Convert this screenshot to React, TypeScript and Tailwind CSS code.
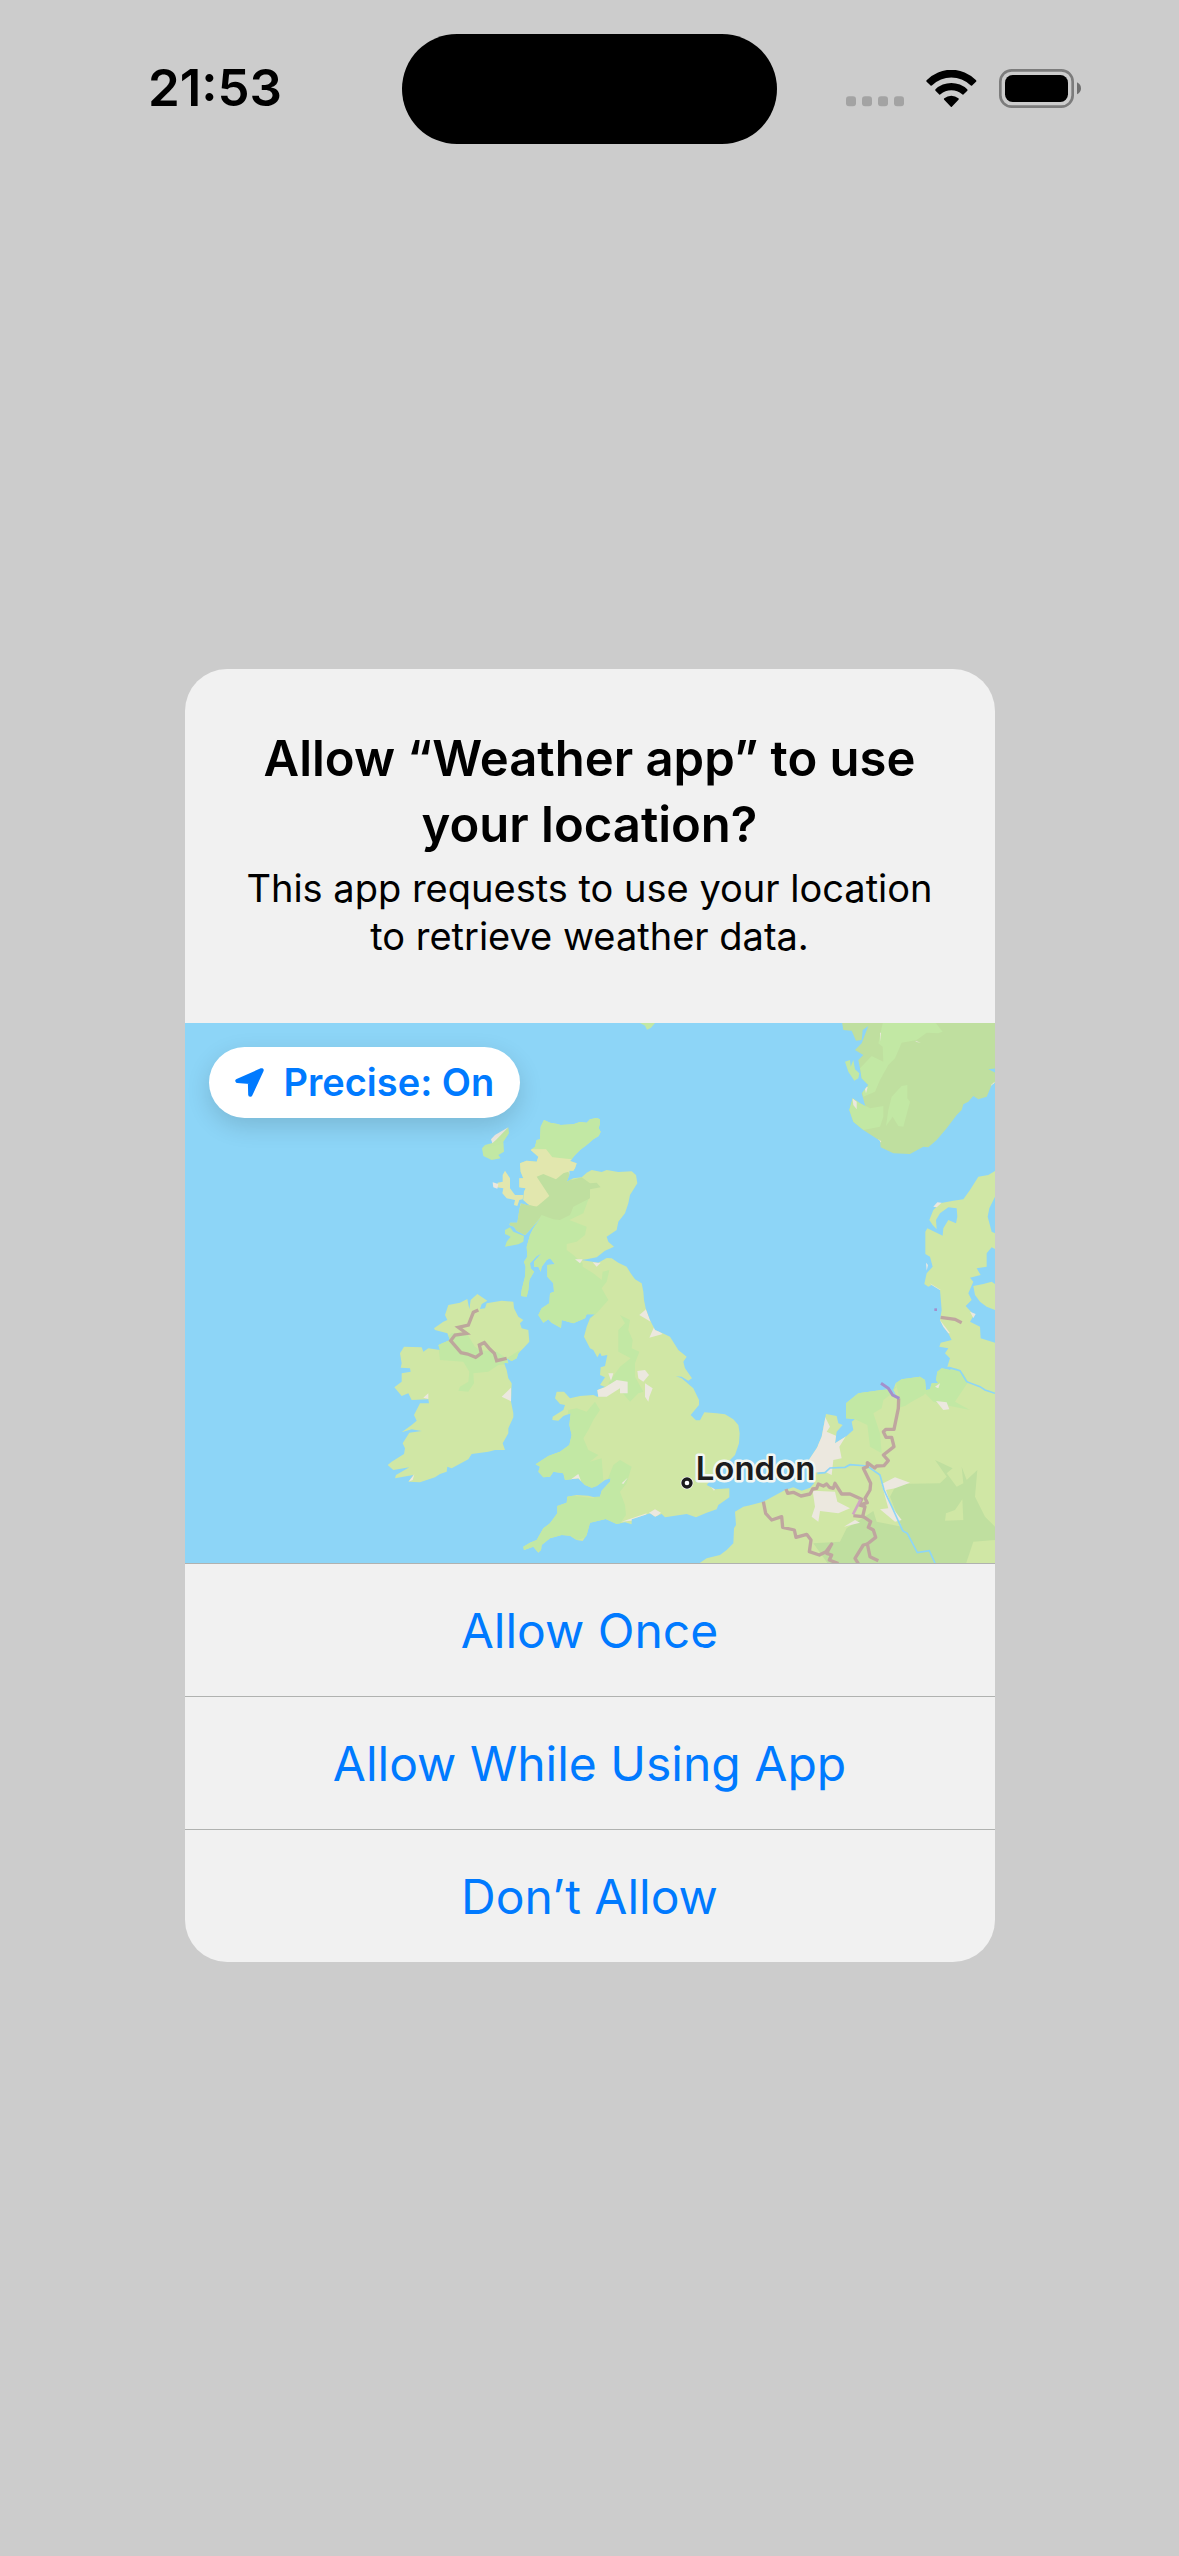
import React from "react";

const LIME = "#d0e7a5";
const GREEN = "#c2e8a4";
const FOREST = "#bfdf9f";
const SAND = "#e2e7ae";
const URBAN = "#ece8df";
const WATER = "#8dd5f7";

type Patch = { fill: string; points: string };

const BRITAIN =
  "552,60 570,68 592,72 602,75 640,73 660,66 680,68 690,58 710,54 720,58 720,70 716,85 722,95 716,108 700,118 680,135 660,150 645,165 635,178 630,183 650,190 645,205 640,212 628,212 628,225 620,245 640,235 665,232 680,218 695,210 725,216 740,210 775,216 815,214 828,225 832,250 810,285 805,310 795,340 775,365 770,390 740,410 745,425 762,440 735,452 710,472 680,478 665,480 715,488 740,474 755,475 775,488 800,500 812,520 825,538 845,550 850,575 852,600 857,625 870,660 885,690 908,700 930,710 955,750 980,770 970,785 975,805 996,835 985,842 965,830 948,829 965,835 1000,865 1017,900 1017,915 992,945 1008,961 1020,961 1033,937 1070,940 1095,943 1120,958 1135,975 1139,1000 1137,1030 1125,1065 1090,1100 1060,1130 1040,1155 1065,1168 1108,1165 1108,1192 1075,1215 1070,1228 1040,1238 1008,1252 980,1242 915,1252 905,1242 885,1250 870,1240 815,1258 815,1273 795,1267 770,1272 737,1257 690,1268 680,1305 668,1323 650,1320 630,1307 605,1305 570,1315 545,1335 543,1350 535,1358 520,1340 492,1350 490,1340 510,1328 530,1320 550,1285 570,1270 592,1240 592,1218 620,1208 622,1190 650,1185 685,1187 700,1191 720,1190 725,1172 750,1145 752,1135 735,1140 710,1158 695,1163 675,1155 655,1135 615,1140 610,1120 580,1115 570,1130 550,1132 535,1115 540,1100 527,1093 565,1068 600,1055 628,1035 635,1005 628,975 632,940 610,948 595,962 577,960 578,950 610,930 615,915 600,912 585,895 590,875 612,875 630,895 660,888 700,885 715,892 712,870 735,860 720,855 735,832 720,825 722,802 735,798 742,765 725,768 720,758 712,772 700,750 690,745 672,710 680,680 690,655 705,643 680,643 675,655 640,670 605,660 603,684 575,668 565,658 550,668 535,645 545,625 568,610 570,580 582,575 580,550 562,530 562,495 585,493 570,475 560,480 545,500 542,515 535,500 522,500 522,485 545,460 530,468 510,490 512,505 522,515 508,540 505,570 500,590 483,588 485,570 495,530 497,500 492,485 502,470 500,440 510,405 520,385 545,350 520,378 495,405 470,392 462,380 448,375 450,368 472,368 478,330 482,310 510,318 490,300 492,275 497,265 478,262 478,235 490,235 482,215 480,190 500,182 530,185 535,170 512,150 525,140 530,120 540,118 542,80";

const IRELAND =
  "352,582 382,602 365,612 360,627 375,625 380,610 425,602 460,605 462,625 475,650 490,660 480,670 485,685 505,690 508,725 490,745 475,760 470,775 455,783 440,775 445,790 432,788 440,810 445,835 455,850 453,905 460,940 460,952 445,985 445,1000 428,1030 435,1050 405,1050 385,1055 335,1062 325,1078 275,1105 262,1100 260,1115 240,1122 225,1132 180,1147 145,1145 160,1125 105,1135 108,1125 148,1102 100,1110 83,1095 95,1085 132,1062 135,1045 128,1030 148,998 185,993 155,988 125,997 155,975 170,962 162,945 180,910 207,910 205,898 155,900 145,880 125,888 103,862 125,845 125,820 152,815 150,805 122,803 125,790 120,760 132,740 185,742 190,755 205,745 240,750 235,735 270,720 262,700 225,690 222,685 250,665 262,660 255,645 265,615 300,608 322,597 328,628 332,600";

const CONTINENT =
  "-90,680 -90,668 -70,655 -30,645 -10,630 10,610 12,565 18,555 15,515 40,500 60,496 100,485 165,450 190,442 215,452 240,443 252,430 250,402 235,362 260,325 275,290 288,222 320,228 325,250 338,255 320,275 315,310 350,288 370,270 365,245 375,238 348,235 348,190 385,160 455,150 480,148 500,170 490,150 497,130 515,118 570,110 585,120 588,150 600,148 605,130 625,130 618,120 622,95 635,85 660,90 670,85 652,80 660,55 645,40 655,25 628,20 632,8 665,0 655,-20 640,-40 630,-60 635,-90 630,-150 605,-165 595,-160 583,-168 590,-200 608,-220 600,-250 586,-258 586,-325 592,-335 638,-313 640,-335 655,-360 678,-350 682,-370 680,-395 655,-398 630,-380 618,-360 620,-332 608,-345 598,-360 610,-390 630,-410 670,-418 700,-422 720,-450 745,-490 775,-495 800,-510 800,-470 795,-430 778,-395 773,-370 785,-325 800,-318 800,-270 785,-278 770,-260 770,-220 740,-215 752,-195 720,-187 730,-175 715,-140 725,-120 707,-102 732,-75 720,-55 750,-40 752,-5 800,10 800,680";

const NORWAY =
  "65,30 70,60 95,62 108,92 125,90 128,60 145,48 125,100 105,120 130,135 115,150 120,175 125,205 145,225 125,250 135,285 140,290 120,280 98,265 88,300 100,335 130,360 180,392 182,412 220,430 270,432 310,410 325,412 350,390 380,355 410,315 425,300 430,283 445,275 460,258 475,268 500,260 515,225 530,215 530,190 505,178 530,175 530,30";

const britainPatches: Patch[] = [
  { fill: GREEN, points: "500,40 740,40 740,180 640,180 577,172 558,148 500,145" },
  { fill: SAND, points: "512,148 558,148 577,172 635,178 655,190 640,215 600,240 568,288 545,315 520,320 490,305 465,270 465,150" },
  { fill: GREEN, points: "690,285 670,340 628,360 680,380 675,405 650,425 620,432 620,450 640,465 668,490 668,500 700,520 725,540 728,515 748,510 740,545 725,565 745,600 710,640 650,690 520,700 470,600 480,400 545,335" },
  { fill: FOREST, points: "530,230 550,222 588,238 610,220 625,215 635,240 665,232 690,250 710,248 722,262 690,268 690,295 640,320 630,345 600,360 580,358 545,345 500,405 440,400 450,370 470,340 485,310 530,320 568,288" },
  { fill: GREEN, points: "780,645 810,660 805,690 818,720 815,745 838,755 825,790 825,830 850,875 835,880 810,905 780,870 745,850 780,800 812,775 775,755 775,690 795,670" },
  { fill: GREEN, points: "625,930 650,925 680,935 705,905 720,930 700,960 685,990 670,1015 685,1050 715,1065 690,1085 725,1075 730,1140 700,1175 500,1160 500,1080 610,1040" },
  { fill: GREEN, points: "700,1195 740,1145 760,1095 780,1080 815,1100 800,1150 780,1175 795,1215 798,1245 770,1285 450,1380 450,1330 580,1180" },
  { fill: URBAN, points: "710,870 735,862 770,840 803,845 803,880 780,880 780,865 740,890 712,890" },
  { fill: URBAN, points: "832,813 855,810 867,825 850,845 835,835" },
  { fill: URBAN, points: "855,850 878,865 868,890 865,905 855,890" },
  { fill: URBAN, points: "745,820 760,820 753,842" },
  { fill: URBAN, points: "838,645 858,628 872,665" },
  { fill: URBAN, points: "882,682 908,702 868,713" },
  { fill: URBAN, points: "866,1239 885,1228 903,1238 887,1252" },
  { fill: URBAN, points: "785,1265 860,1240 855,1258" },
  { fill: URBAN, points: "630,1140 655,1122 664,1145" },
  { fill: URBAN, points: "698,487 722,488 710,500" },
  { fill: URBAN, points: "645,478 668,478 660,490" },
  { fill: URBAN, points: "785,1150 803,1133 790,1152" },
  { fill: URBAN, points: "1050,1157 1068,1163 1062,1172" },
];

const continentPatches: Patch[] = [
  { fill: GREEN, points: "340,150 500,140 480,165 460,180 455,205 430,220 450,280 455,340 420,320 412,255 375,238 340,240" },
  { fill: GREEN, points: "490,100 590,100 592,150 582,165 545,185 525,198 500,205 508,172" },
  { fill: GREEN, points: "600,80 680,85 700,100 715,125 675,185 720,210 660,198 610,185 585,160 605,130" },
  { fill: FOREST, points: "615,360 668,385 650,400 680,440 700,430 695,380 710,420 742,390 735,470 765,530 795,560 795,600 730,605 705,680 300,680 250,610 330,605 350,565 430,513 440,545 515,560 480,470 500,432 630,430 650,410" },
  { fill: LIME, points: "697,478 675,510 648,520 645,542 700,540" },
  { fill: URBAN, points: "285,230 300,260 290,275 325,290 348,288 328,320 335,355 310,360 305,405 285,395 230,400 230,355 262,320" },
  { fill: URBAN, points: "248,452 315,455 322,485 360,505 325,520 270,513 265,545 245,530 255,500" },
  { fill: URBAN, points: "455,432 495,412 540,428 495,445 468,450 485,500 515,540 495,545 450,508 475,505" },
  { fill: URBAN, points: "618,183 650,187 658,208 640,210" },
  { fill: URBAN, points: "615,140 630,130 625,145" },
  { fill: URBAN, points: "342,560 375,540 390,548" },
  { fill: URBAN, points: "630,-60 660,-20 650,-20 625,-50" },
  { fill: URBAN, points: "600,-170 632,-150 620,-150" },
];

const norwayPatches: Patch[] = [
  { fill: GREEN, points: "190,30 340,30 368,65 355,70 320,68 290,90 245,98 225,145 205,165 180,210 165,245 130,260 120,175 155,138 190,155 188,110 175,100" },
  { fill: GREEN, points: "85,255 150,295 190,288 190,320 180,350 130,360 80,330" },
  { fill: GREEN, points: "215,260 245,228 262,225 262,265 270,275 250,350 235,348 218,320 198,348 205,300" },
  { fill: URBAN, points: "97,265 110,275 110,298 100,285" },
  { fill: URBAN, points: "133,228 143,232 138,250" },
  { fill: URBAN, points: "175,388 184,394 178,400" },
  { fill: URBAN, points: "180,68 183,68 183,95" },
  { fill: URBAN, points: "285,92 303,98 290,96" },
  { fill: URBAN, points: "513,225 524,215 520,235" },
];

function Patches({ items }: { items: Patch[] }) {
  return (
    <>
      {items.map((p) => (
        <polygon key={p.points} points={p.points} fill={p.fill} />
      ))}
    </>
  );
}

function LocationMap() {
  return (
    <svg
      className="block h-[540px] w-full bg-[#8dd5f7]"
      viewBox="0 0 2430 1620"
      preserveAspectRatio="xMidYMid slice"
      role="img"
      aria-label="Map of the British Isles"
    >
      <defs>
        <clipPath id="britain"><polygon points={BRITAIN} /></clipPath>
        <clipPath id="ireland"><polygon points={IRELAND} /></clipPath>
        <clipPath id="continent"><polygon points={CONTINENT} /></clipPath>
        <clipPath id="norway"><polygon points={NORWAY} /></clipPath>
      </defs>

      <polygon points="1365,0 1410,0 1398,14 1386,20 1380,8" fill={GREEN} />

      <g transform="translate(525 231)">
        <polygon points={BRITAIN} fill={LIME} />
        <g clipPath="url(#britain)"><Patches items={britainPatches} /></g>
        <polygon points="445,82 447,100 430,125 432,155 415,165 422,175 395,180 370,168 366,145 375,135 395,130 410,115" fill={GREEN} />
        <polygon points="445,82 410,118 397,130 393,118 405,105" fill={URBAN} />
        <polygon points="435,212 450,235 450,265 465,285 490,285 488,298 478,300 472,318 462,315 465,300 440,295 427,280 430,265 410,262 413,248 428,245 428,225" fill={SAND} />
        <polygon points="398,247 415,252 412,266 400,262" fill={URBAN} />
        <polygon points="435,390 450,382 460,395 492,408 490,425 475,433 435,440 440,425 452,410 435,402" fill={GREEN} />

        <polygon points={IRELAND} fill={LIME} />
        <g clipPath="url(#ireland)">
          <polygon points="235,735 275,700 320,700 345,740 360,750 410,755 440,775 480,750 475,790 415,795 385,815 340,820 342,850 325,875 295,872 300,860 325,845 328,815 310,785 240,780" fill={GREEN} />
          <polygon points="425,890 453,863 455,905" fill={URBAN} />
          <polygon points="145,1145 163,1123 158,1140" fill={URBAN} />
          <polygon points="190,893 205,880 205,897" fill={URBAN} />
        </g>
        <polyline points="355,630 340,637 325,675 295,682 320,700 285,705 272,722 303,758 323,762 347,772 364,760 358,735 373,728 390,748 403,760 410,782 440,775" fill="none" stroke="#bda79c" strokeWidth="10" />
      </g>

      <g transform="translate(1635 951)">
        <polygon points={CONTINENT} fill={LIME} />
        <g clipPath="url(#continent)"><Patches items={continentPatches} /></g>
        <polyline points="262,400 285,398 300,384 345,382 360,374 412,378 450,405 462,450 490,510 518,572 532,580 562,638 598,632 615,669" fill="none" stroke={WATER} strokeWidth="5" />
        <polyline points="655,82 690,92 710,125 750,140 765,150 795,160" fill="none" stroke={WATER} strokeWidth="5" />
        <g fill="none" stroke="#bfa69f" strokeWidth="10" strokeLinejoin="round">
          <polyline points="100,485 107,520 125,540 155,530 158,562 193,570 198,592 230,583 243,600 238,635 268,645 288,635 305,612 290,640 305,645 298,660 325,671" />
          <polyline points="168,447 173,460 190,457 213,468 240,462 248,447 260,445 265,432 280,438 290,432 298,442 310,445 315,430 335,462 360,462 395,478 388,492" />
          <polyline points="506,175 505,205 492,268 468,268 460,275 468,292 485,292 492,320 460,345 475,362 462,377 440,378 434,384 412,368 412,380 400,385 422,430 420,450 405,475 412,488 388,495 405,500 398,530 370,527" />
          <polyline points="400,530 422,545 415,562 430,570 437,592 412,612 420,650 445,662" />
          <polyline points="412,612 400,615 375,655 385,671" />
        </g>
        <polyline points="453,130 475,145 488,165 508,175" fill="none" stroke="#a38fcc" strokeWidth="9" />
        <polyline points="392,478 369,523" fill="none" stroke="#cfa6c2" strokeWidth="8" />
      </g>

      <g transform="translate(1905 -39)">
        <polygon points={NORWAY} fill={FOREST} />
        <g clipPath="url(#norway)"><Patches items={norwayPatches} /></g>
        <polygon points="75,155 90,150 92,170 100,150 105,178 118,190 115,205 103,212 85,185" fill={GREEN} />
        <polygon points="460,828 490,822 515,815 530,825 530,902 500,890 480,875 465,855" fill={LIME} />
        <polygon points="450,905 467,912 460,924" fill={URBAN} />
        <polygon points="340,590 352,577 365,578 350,592" fill={URBAN} />
        <polygon points="318,758 324,765 320,782" fill={URBAN} />
        <polyline points="362,922 405,928 425,938" fill="none" stroke="#bfa69f" strokeWidth="10" />
        <rect x="343" y="895" width="8" height="8" fill="#a38fcc" />
      </g>

      <circle cx="1506" cy="1380" r="12" fill="#ffffff" stroke="#ffffff" strokeWidth="14" />
      <circle cx="1506" cy="1380" r="12" fill="#ffffff" stroke="#1c1c1e" strokeWidth="10" />
      <text
        x="1532"
        y="1371"
        fontSize="99"
        className="font-['Inter',sans-serif] font-semibold"
        fill="#1c1c1e"
        stroke="#f3f7f3"
        strokeWidth="15"
        strokeLinejoin="round"
        paintOrder="stroke"
      >
        London
      </text>
    </svg>
  );
}

function StatusBar() {
  return (
    <header className="grid grid-cols-[1fr_375px_1fr] items-center pt-[34px]">
      <time className="pb-0.5 pl-7 text-center text-[51px] leading-[60px] font-semibold">21:53</time>
      <div className="h-[110px] rounded-full bg-black" />
      <div className="flex items-center justify-center gap-[22px] pr-[30px] pb-0.5">
        <svg className="h-[38px] w-[58px]" viewBox="0 0 174 114" aria-label="No signal">
          {[0, 48, 96, 144].map((x) => (
            <rect key={x} x={x} y="82" width="30" height="30" rx="9" fill="#a3a3a3" />
          ))}
        </svg>
        <svg className="h-[37px] w-[51px]" viewBox="0 0 152 111" aria-label="Wi-Fi">
          <path d="M1.500 35Q-1 32.500 2 30A103 103 0 0 1 149 30Q152 32.500 149.500 35L137 47Q135 48 133 46A83 83 0 0 0 18 46Q16 48 14 47Z" />
          <path d="M28 62Q26 60 28 58A68 68 0 0 1 123 58Q125.500 60 123.500 62L111 74Q109.500 75 108 73A50 50 0 0 0 43 73Q41.500 75 40 74Z" />
          <path d="M54 89Q52 87 54.500 85A32 32 0 0 1 96.500 85Q99 87 97 89L77 110Q75.500 111.500 74 110Z" />
        </svg>
        <svg className="h-[39px] w-[82px]" viewBox="0 0 246 117" aria-label="Battery full">
          <rect x="4" y="4" width="217" height="109" rx="34" fill="none" stroke="#7c7c7c" strokeWidth="8" />
          <rect x="18" y="18" width="189" height="81" rx="23" />
          <path d="M234 40Q246 46 246 58T234 76Z" fill="#6f6f6f" />
        </svg>
      </div>
    </header>
  );
}

const choices = ["Allow Once", "Allow While Using App", "Don’t Allow"];

export default function App() {
  return (
    <div className="flex min-h-screen flex-col bg-[#cccccc] font-['Inter',sans-serif] text-black">
      <StatusBar />
      <main className="flex flex-1 items-center justify-center px-6 pb-[70px]">
        <section
          role="alertdialog"
          aria-labelledby="alert-title"
          aria-describedby="alert-message"
          className="w-full max-w-[810px] overflow-hidden rounded-[42px] bg-[#f1f1f1]"
        >
          <div className="px-12 pt-[57px] pb-[63px] text-center">
            <h1 id="alert-title" className="text-[49px] leading-[66px] font-semibold">
              Allow “Weather app” to use
              <br />
              your location?
            </h1>
            <p id="alert-message" className="mt-1.5 text-[38px] leading-[48px]">
              This app requests to use your location
              <br />
              to retrieve weather data.
            </p>
          </div>
          <div className="relative">
            <LocationMap />
            <button
              type="button"
              className="absolute top-6 left-6 flex h-[71px] items-center gap-5 rounded-full bg-white px-[26px] text-[38px] font-semibold text-[#007aff] shadow-[0_8px_24px_rgba(0,0,0,0.14)]"
            >
              <svg className="size-[29px]" viewBox="0 0 87 88" aria-hidden="true">
                <path
                  d="M80 7L7 39L45 42L46 81Z"
                  fill="currentColor"
                  stroke="currentColor"
                  strokeWidth="13"
                  strokeLinejoin="round"
                />
              </svg>
              Precise: On
            </button>
          </div>
          <div className="flex flex-col">
            {choices.map((label) => (
              <button
                key={label}
                type="button"
                className="h-[133px] border-t border-[#b0b2b0] pt-0.5 text-[48px] text-[#007aff]"
              >
                {label}
              </button>
            ))}
          </div>
        </section>
      </main>
    </div>
  );
}
